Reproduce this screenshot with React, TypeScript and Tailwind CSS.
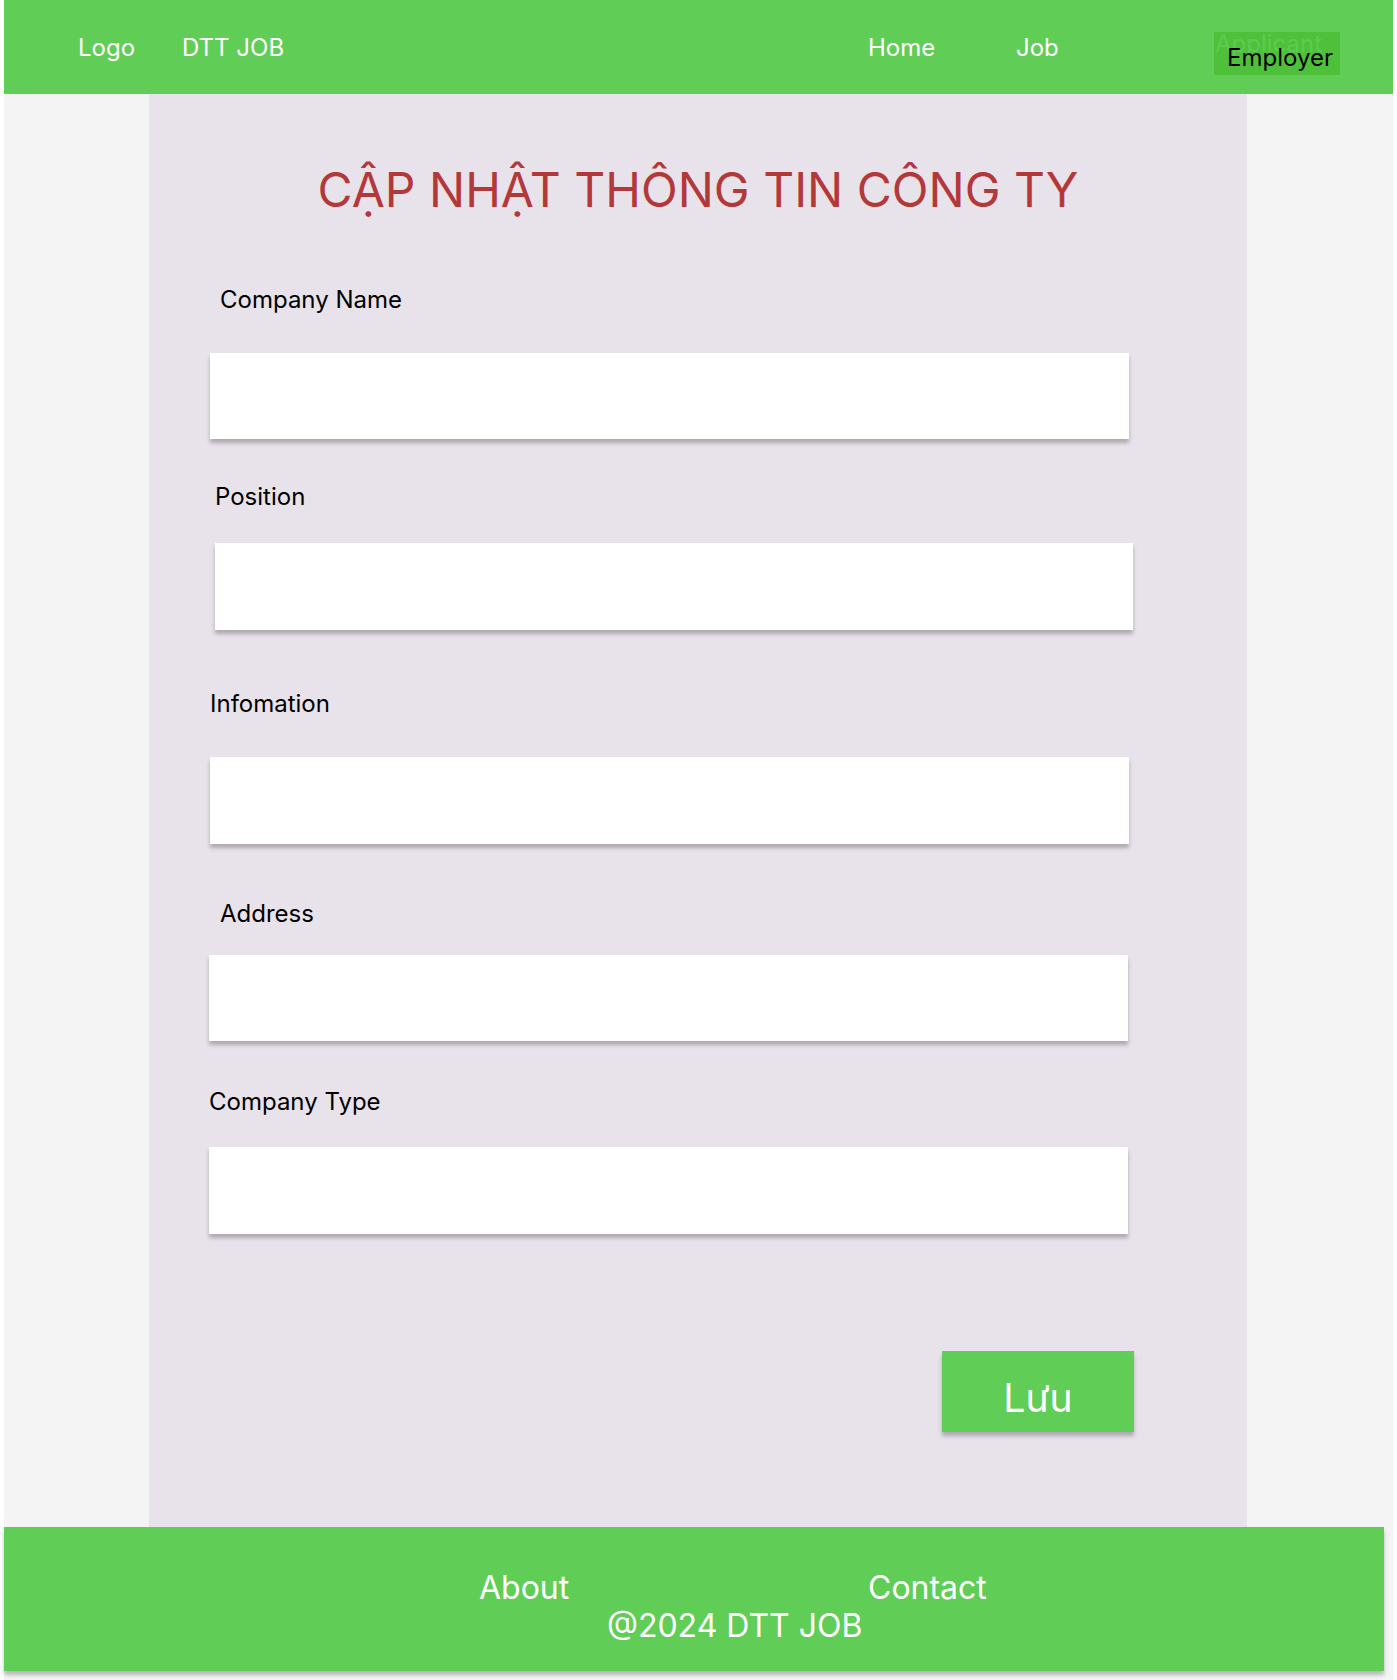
const fields = [
  { label: "Company Name", labelClass: "ml-[71px] mt-[67px]", inputClass: "ml-[61px] mt-[39px] w-[919px] h-[86px]" },
  { label: "Position", labelClass: "ml-[66px] mt-[44px]", inputClass: "ml-[66px] mt-[32px] w-[918px] h-[87px]" },
  { label: "Infomation", labelClass: "ml-[61px] mt-[60px]", inputClass: "ml-[61px] mt-[39px] w-[919px] h-[87px]" },
  { label: "Address", labelClass: "ml-[71px] mt-[56px]", inputClass: "ml-[60px] mt-[27px] w-[919px] h-[86px]" },
  { label: "Company Type", labelClass: "ml-[60px] mt-[47px]", inputClass: "ml-[60px] mt-[31px] w-[919px] h-[87px]" },
];

function Header() {
  return (
    <header className="flex h-[94px] items-center bg-[#60ce56] text-[24px] leading-[29px] text-white">
      <span className="ml-[74px] w-[104px]">Logo</span>
      <span className="w-[686px]">DTT JOB</span>
      <span className="w-[148px]">Home</span>
      <span className="w-[198px]">Job</span>
      <div className="relative mt-[13px] h-[43px] w-[126px] bg-[#4fc03a]">
        <span className="absolute left-[1px] top-[-3px] text-[#5ccb50]">Applicant</span>
        <span className="absolute left-[13px] top-[11px] text-black">Employer</span>
      </div>
    </header>
  );
}

function Footer() {
  return (
    <footer className="relative h-[144px] w-[1380px] bg-[#60ce56] text-[32px] leading-[38px] text-white shadow-[0_4px_4px_rgba(0,0,0,0.25)]">
      <span className="absolute left-[475px] top-[42px]">About</span>
      <span className="absolute left-[864px] top-[42px]">Contact</span>
      <span className="absolute left-[603px] top-[80px]">@2024 DTT JOB</span>
    </footer>
  );
}

export default function App() {
  return (
    <div
      className="min-h-[1680px] bg-white px-[4px]"
      style={{ fontFamily: "Inter, 'Noto Sans', sans-serif" }}
    >
      <div className="bg-[#f4f4f4] pb-[9px]">
        <Header />
        <main className="pl-[145px]">
          <div className="flex h-[1433px] w-[1098px] flex-col bg-[#e8e2ea]">
            <h1 className="pt-[67px] text-center text-[48px] leading-[58px] text-[#b3383a]">
              CẬP NHẬT THÔNG TIN CÔNG TY
            </h1>
            {fields.map((f) => (
              <div key={f.label} className="flex flex-col items-start">
                <label className={`${f.labelClass} text-[24px] leading-[28px] text-black`}>
                  {f.label}
                </label>
                <input
                  className={`${f.inputClass} bg-white shadow-[0_4px_4px_rgba(0,0,0,0.25)] outline-none`}
                />
              </div>
            ))}
            <button className="ml-[793px] mt-[117px] h-[81px] w-[192px] bg-[#60ce56] pt-[12px] text-[39px] leading-[47px] text-white shadow-[0_4px_4px_rgba(0,0,0,0.25)]">
              Lưu
            </button>
          </div>
        </main>
        <Footer />
      </div>
    </div>
  );
}
